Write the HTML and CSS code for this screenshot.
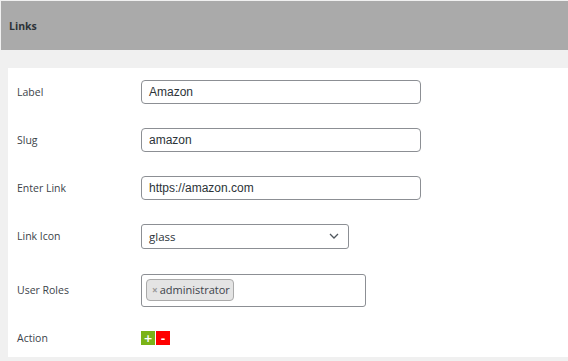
FILE: index.html
```html
<!DOCTYPE html>
<html>
<head>
<meta charset="utf-8">
<link rel="stylesheet" href="styles.css">
</head>
<body>
<div class="page">
  <div class="header"><h2 class="title">Links</h2></div>
  <div class="wrap">
    <div class="card">
      <div class="row">
        <div class="lbl">Label</div>
        <div class="field"><div class="input w280">Amazon</div></div>
      </div>
      <div class="row">
        <div class="lbl">Slug</div>
        <div class="field"><div class="input w280">amazon</div></div>
      </div>
      <div class="row">
        <div class="lbl">Enter Link</div>
        <div class="field"><div class="input w280">https://amazon.com</div></div>
      </div>
      <div class="row">
        <div class="lbl">Link Icon</div>
        <div class="field">
          <div class="select">
            <span>glass</span>
            <svg class="chev" width="10" height="6" viewBox="0 0 10 6"><path d="M1 1l4 4 4-4" fill="none" stroke="#50575e" stroke-width="1.3"/></svg>
          </div>
        </div>
      </div>
      <div class="row roles">
        <div class="lbl">User Roles</div>
        <div class="field">
          <div class="multi"><span class="tag"><span class="x">×</span>administrator</span></div>
        </div>
      </div>
      <div class="row action">
        <div class="lbl">Action</div>
        <div class="field">
          <div class="btns"><span class="btn add">+</span><span class="btn rem">-</span></div>
        </div>
      </div>
    </div>
  </div>
</div>
</body>
</html>
```
FILE: styles.css
```css
html, body { margin: 0; padding: 0; background: #f0f0f0; }
body { font-family: "Open Sans", "Noto Sans", sans-serif; color: #3c434a; }
.page { width: 568px; height: 361px; overflow: hidden; background: #f0f0f0; }
.header { margin: 1px 0 0 1px; height: 49px; background: #aaaaaa; display: flex; align-items: center; padding-left: 8px; box-sizing: border-box; }
.title { margin: 0; font-size: 10.5px; font-weight: 700; color: #2c3338; }
.wrap { padding: 18px 0 0 8px; }
.card { background: #fff; height: 289px; padding-left: 9px; }
.row { display: flex; align-items: center; height: 48px; }
.row.roles { height: 60px; }
.row.action { height: 36px; }
.lbl { width: 124px; font-size: 10.5px; color: #3c434a; }
.field { display: flex; align-items: center; }
.input { box-sizing: border-box; height: 24px; border: 1px solid #8c8f94; border-radius: 4px; padding: 0 7px; font-family: "Liberation Sans", Arial, sans-serif; font-size: 12px; color: #2c3338; display: flex; align-items: center; }
.w280 { width: 280px; }
.select { box-sizing: border-box; width: 208px; height: 25px; border: 1px solid #8c8f94; border-radius: 3px; padding: 0 8px 0 7px; font-size: 11.5px; color: #2c3338; display: flex; align-items: center; justify-content: space-between; }
.chev { margin-right: 1px; }
.multi { box-sizing: border-box; width: 225px; height: 33px; border: 1px solid #8c8f94; border-radius: 3px; padding: 4px; display: flex; align-items: flex-start; }
.tag { box-sizing: border-box; height: 22px; background: #e4e4e4; border: 1px solid #aaa; border-radius: 4px; padding: 0 3px 0 5px; font-size: 11px; color: #3c434a; display: flex; align-items: center; }
.x { color: #999; font-size: 10px; margin-right: 2px; font-weight: 700; }
.btns { display: flex; }
.btn { width: 14px; height: 14px; display: flex; align-items: center; justify-content: center; color: #fff; font-weight: 700; font-size: 11px; line-height: 1; font-family: "DejaVu Sans", sans-serif; }
.add { background: #7ab317; }
.rem { background: #ff0000; margin-left: 1px; }
```
